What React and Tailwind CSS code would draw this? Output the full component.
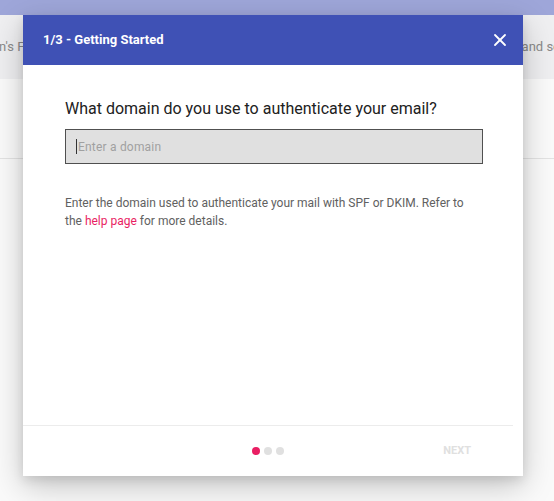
import { X } from 'lucide-react'

export default function App() {
  return (
    <div className="relative h-[501px] w-[554px] overflow-hidden bg-[#fafafa] font-['Roboto',sans-serif]">
      {/* page behind the dialog */}
      <div className="h-[15px] bg-[#9ea6d9]" />
      <div className="flex h-[64px] items-center justify-between overflow-hidden whitespace-nowrap bg-[#efeff1] text-[13px] text-[#8a8a8a]">
        <span className="-ml-[1px]">n's F</span>
        <span className="-mr-[6px]">and se</span>
      </div>
      <div className="h-[79px]" />
      <div className="h-px bg-[#e3e3e3]" />

      {/* dialog */}
      <div className="absolute left-[23px] top-[15px] flex h-[461px] w-[500px] flex-col bg-white shadow-[0_10px_30px_rgba(0,0,0,0.22),0_4px_10px_rgba(0,0,0,0.1)]">
        <div className="flex h-[50px] items-center justify-between bg-[#3f51b5] pl-5 pr-[13px] text-white">
          <h1 className="text-[13px] font-bold">1/3 - Getting Started</h1>
          <X size={20} strokeWidth={2.2} />
        </div>

        <div className="flex-1 px-[42px] pt-[33px]">
          <h2 className="text-[16px] leading-[22px] text-[#212121]">What domain do you use to authenticate your email?</h2>
          <div className="mt-[9px] flex h-[35px] w-[418px] items-center border border-[#505050] bg-[#e0e0e0] px-[10px]">
            <span className="mr-px h-[15px] w-px bg-[#333]" />
            <input
              className="w-full bg-transparent text-[12px] tracking-[0.2px] text-[#212121] outline-none placeholder:text-[#a0a0a0]"
              placeholder="Enter a domain"
            />
          </div>
          <p className="mt-[30px] text-[12px] leading-[18px] text-[#616161]">
            Enter the domain used to authenticate your mail with SPF or DKIM. Refer to the{' '}
            <a href="#" className="text-[#e91e63]">help page</a> for more details.
          </p>
        </div>

        <div className="mr-[10px] h-px bg-[#ececec]" />
        <div className="relative flex h-[50px] items-center justify-center pr-[10px]">
          <div className="flex gap-[4px]">
            <span className="h-2 w-2 rounded-full bg-[#e91e63]" />
            <span className="h-2 w-2 rounded-full bg-[#e0e0e0]" />
            <span className="h-2 w-2 rounded-full bg-[#e0e0e0]" />
          </div>
          <button className="absolute right-[52px] text-[11px] font-bold text-[#e0e0e0]">NEXT</button>
        </div>
      </div>
    </div>
  )
}
